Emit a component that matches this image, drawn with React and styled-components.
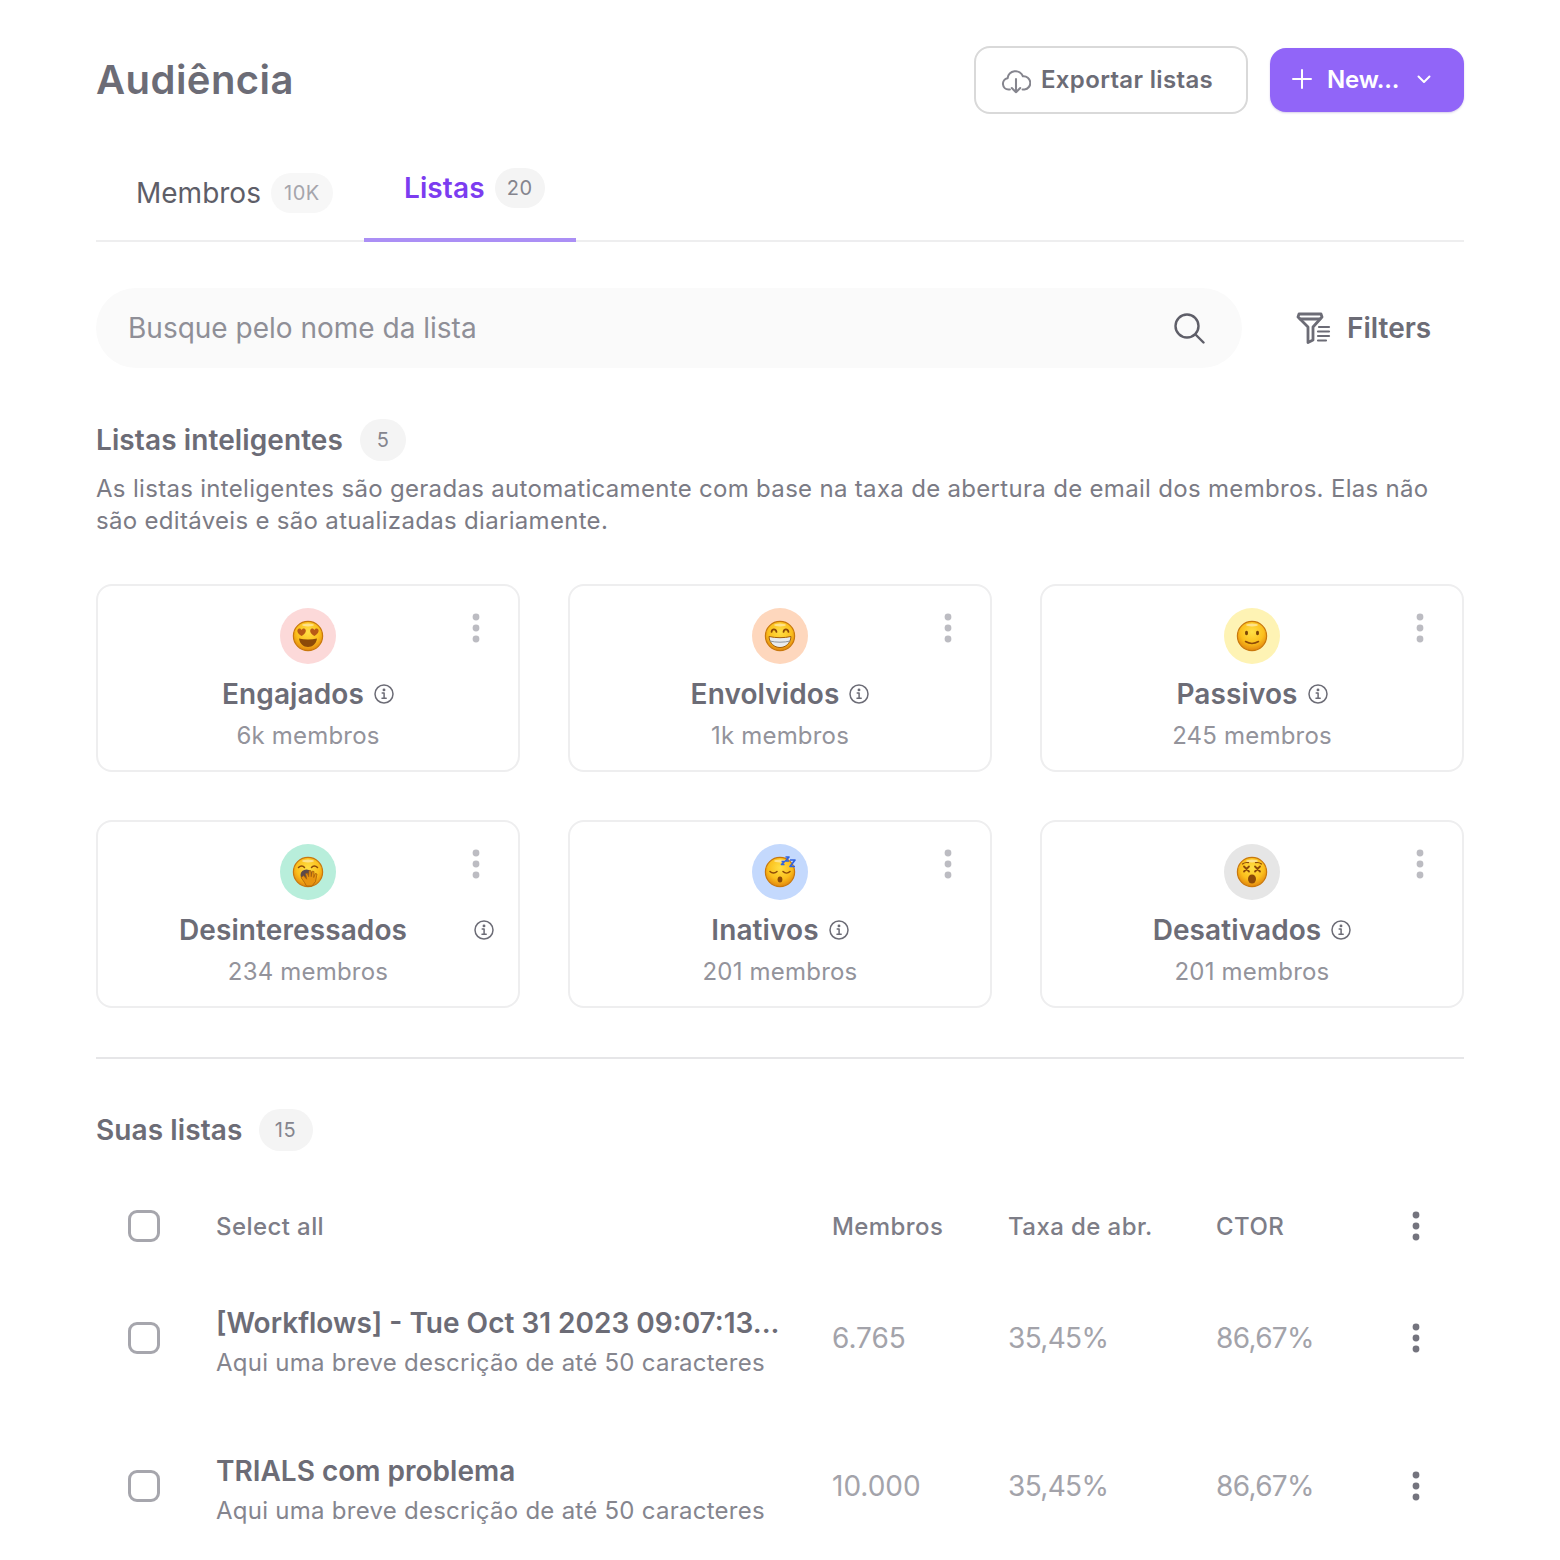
import React from "react";
import styled, { createGlobalStyle } from "styled-components";

const Global = createGlobalStyle`
  html, body { margin: 0; padding: 0; background: #fff; }
  body { font-family: Inter, "Liberation Sans", sans-serif; color: #6c6c76; }
  * { box-sizing: border-box; }
`;
const Page = styled.div`
  width: 1560px; height: 1560px; overflow: hidden; padding: 46px 96px 0;
`;
const Header = styled.header`
  display: flex; align-items: center; justify-content: space-between; height: 68px;
`;
const Title = styled.h1`
  margin: 0; font-size: 40px; line-height: 48px; font-weight: 600; letter-spacing: .45px; color: #6c6c76;
`;
const Actions = styled.div`display: flex; align-items: center; gap: 22px;`;
const GhostButton = styled.button`
  display: flex; align-items: center; gap: 10px; width: 274px; height: 68px; padding: 0 0 2px 25px;
  background: #fff; border: 2px solid #d9d9d9; border-radius: 16px;
  font: 600 24px Inter, sans-serif; letter-spacing: .34px; color: #6c6c76;
  svg { margin-top: 4px; }
`;
const PrimaryButton = styled.button`
  display: flex; align-items: center; width: 194px; height: 64px; padding: 0 0 2px 22px;
  background: #9165f8; border: 0; border-radius: 16px; box-shadow: 0 1px 2px rgba(90,60,170,.25);
  font: 600 24px Inter, sans-serif; letter-spacing: -.2px; color: #fff;
  span { margin: 0 17px 0 15px; }
`;
const Tabs = styled.nav`
  display: flex; height: 128px; border-bottom: 2px solid #eeeeef;
`;
const Tab = styled.div`
  position: relative; display: flex; align-items: center; gap: 10px;
  height: 126px; padding: ${p => p.$active ? "22px 32px 0 40px" : "32px 32px 0 40px"};
  width: ${p => p.$active ? "212px" : "268px"};
  font-size: 28px; font-weight: ${p => p.$active ? 600 : 400};
  letter-spacing: ${p => p.$active ? ".1px" : "0"};
  color: ${p => p.$active ? "#7c3cf0" : "#5e5e68"};
  ${p => p.$active && `&::after { content: ""; position: absolute; left: 0; right: 0; bottom: -2px; height: 4px; background: #ab8ff5; }`}
`;
const Pill = styled.span`
  display: inline-flex; align-items: center; justify-content: center;
  height: ${p => p.$h || 40}px; min-width: ${p => p.$w || 40}px; padding: 0 11px; border-radius: 21px;
  background: ${p => p.$bg || "#f4f4f4"}; color: ${p => p.$c || "#7f7f88"};
  font-size: ${p => p.$fs || 20}px; font-weight: 400; letter-spacing: .5px;
`;
const SearchRow = styled.div`
  display: flex; align-items: center; margin-top: 46px; gap: 54px;
`;
const Search = styled.div`
  flex: none; width: 1146px; height: 80px; border-radius: 40px; background: #fafafa;
  display: flex; align-items: center; justify-content: space-between; padding: 0 37px 0 32px;
  font-size: 28px; color: #8f8f97;
`;
const Filters = styled.div`
  display: flex; align-items: center; gap: 15px; font-size: 28px; font-weight: 600; color: #6c6c76;
`;
const SectionHead = styled.div`
  display: flex; align-items: center; gap: ${p => p.$gap || 17}px; height: 42px; margin-top: ${p => p.$mt}px;
  font-size: 28px; font-weight: 600; letter-spacing: .1px; color: #6c6c76;
`;
const Desc = styled.p`
  margin: 11.5px 0 0; font-size: 24px; line-height: 32px; letter-spacing: .31px; color: #7b7b85;
`;
const Cards = styled.div`
  display: grid; grid-template-columns: repeat(3, 424px); grid-auto-rows: 188px; gap: 48px; margin-top: 47.5px;
`;
const Card = styled.article`
  position: relative; display: flex; flex-direction: column; align-items: center; padding: 22px 24px 0;
  border: 2px solid #eeeeef; border-radius: 16px;
`;
const Avatar = styled.div`
  width: 56px; height: 56px; border-radius: 50%; background: ${p => p.$bg};
  display: flex; align-items: center; justify-content: center;
`;
const CardTitleRow = styled.div`
  display: flex; align-items: center; justify-content: center; gap: 10px; margin-top: 12px; height: 36px;
  width: ${p => p.$wide ? "372px" : "auto"};
`;
const CardTitle = styled.h3`
  margin: 0; flex: ${p => p.$wide ? 1 : "none"}; text-align: center; font-size: 28px; font-weight: 600; letter-spacing: .1px; color: #6c6c76;
`;
const CardSub = styled.div`
  margin-top: 8px; font-size: 24px; line-height: 32px; letter-spacing: .2px; color: #93939b;
`;
const CardMenu = styled.div`
  position: absolute; top: 26px; right: 34px; width: 16px;
  display: flex; justify-content: center;
`;
const Rule = styled.hr`
  margin: 49px 0 0; height: 2px; border: 0; background: #e6e6e8;
`;
const Row = styled.div`
  display: grid; grid-template-columns: 88px 616px 176px 208px 180px 40px; align-items: center;
  height: ${p => p.$h}px; padding-left: 32px; margin-top: ${p => p.$mt || 0}px;
`;
const Check = styled.div`
  width: 32px; height: 32px; border: 3px solid #a6a6ad; border-radius: 9px; background: #fff;
`;
const HeadCell = styled.div`
  font-size: 24px; font-weight: 500; letter-spacing: .42px; color: #7d7d87;
`;
const NameCell = styled.div`min-width: 0; margin-top: 10px;`;
const RowTitle = styled.div`
  font-size: 28px; line-height: 36px; font-weight: 600; color: #6c6c76;
  white-space: nowrap; margin-top: -2px;
`;
const RowSub = styled.div`
  margin-top: 6px; font-size: 24px; line-height: 32px; letter-spacing: .26px; color: #85858e; white-space: nowrap;
`;
const Num = styled.div`
  font-size: 28px; letter-spacing: ${p => p.$pct ? "-.65px" : "0"}; color: #a3a3aa;
`;
const DotsCell = styled.div`display: flex; justify-content: center; width: 40px;`;

const Dots = ({ color = "#bcbcc2" }) => (
  <svg width="12" height="32" viewBox="0 0 12 32" fill={color}>
    <circle cx="6" cy="5" r="3.4" /><circle cx="6" cy="16" r="3.4" /><circle cx="6" cy="27" r="3.4" />
  </svg>
);
const Info = () => (
  <svg width="20" height="20" viewBox="0 0 20 20" fill="none" stroke="#6c6c76" strokeWidth="1.5" strokeLinecap="round" strokeLinejoin="round">
    <circle cx="10" cy="10" r="9" />
    <path d="M8.2 9h1.9v5M8 14.2h4.2" />
    <circle cx="10" cy="5.9" r=".7" fill="#6c6c76" />
  </svg>
);
const Defs = () => (
  <svg width="0" height="0" style={{ position: "absolute" }}>
    <defs>
      <radialGradient id="face" cx="50%" cy="36%" r="64%">
        <stop offset="0" stopColor="#ffdf45" />
        <stop offset=".62" stopColor="#fbbf1c" />
        <stop offset="1" stopColor="#e2860e" />
      </radialGradient>
    </defs>
  </svg>
);
const Face = ({ children }) => (
  <svg width="32" height="32" viewBox="0 0 32 32" style={{ overflow: "visible" }}>
    <circle cx="16" cy="16" r="14.6" fill="url(#face)" stroke="#c9780c" strokeWidth="1.2" />
    <ellipse cx="16" cy="5" rx="6" ry="1.5" fill="#fff" opacity=".45" />
    {children}
  </svg>
);
const Heart = ({ x, y }) => (
  <path transform={`translate(${x} ${y})`} d="M0 5.5C-4.5 2.500-5 -.2-3.400-1.600-2 -2.700-.6-1.900 0 -.6c.6-1.300 2-2.100 3.400-1 1.600 1.400 1.100 4.100-3.400 7.100z" fill="#b85a16" />
);
const faces = {
  love: <Face><Heart x={9.6} y={10.5} /><Heart x={22.4} y={10.5} /><path d="M7 18.5c5.500 1.200 12.500 1.200 18 0-.8 5.500-4.500 8.500-9 8.500s-8.200-3-9-8.500z" fill="#8c4a08" /></Face>,
  grin: <Face>
    <path d="M7.500 12c.6-3.400 4.200-3.400 5 0M19.500 12c.6-3.400 4.200-3.400 5 0" fill="none" stroke="#8c4a08" strokeWidth="1.700" strokeLinecap="round" />
    <path d="M5 16.500c7 1.600 15 1.600 22 0-.4 7-5.500 11-11 11S5.400 23.500 5 16.500z" fill="#e9ecef" stroke="#a35f0a" strokeWidth="1" />
    <path d="M5.600 21c6.500 1.600 14.300 1.600 20.800 0" fill="none" stroke="#8f959b" strokeWidth="1" />
  </Face>,
  smile: <Face>
    <ellipse cx="10.500" cy="13" rx="1.500" ry="2.200" fill="#7a4506" /><ellipse cx="21.500" cy="13" rx="1.500" ry="2.200" fill="#7a4506" />
    <path d="M9.500 21.500c4 2.400 9 2.400 13 0" fill="none" stroke="#8c4a08" strokeWidth="1.500" strokeLinecap="round" />
  </Face>,
  yawn: <Face>
    <path d="M6.500 11.500c2-2 4.500-2 6 0M19.500 11.500c1.500-2 4-2 6 0" fill="none" stroke="#8c4a08" strokeWidth="1.500" strokeLinecap="round" />
    <ellipse cx="14.500" cy="19" rx="6" ry="5.500" fill="#5d4a4a" />
    <path d="M9 21.500l3.500 5 2 3.500h5.500l3.500-4.500 1.500-7.500-1.800-.5-1.500 4 .3-6-1.800-.3-1 5.500-.3-6-1.800 0-.4 6-1.400-3.500-1.600.5 1 5.500-3-3.500z" fill="#e8940f" stroke="#a85f0a" strokeWidth=".8" />
  </Face>,
  sleep: <Face>
    <path d="M6 15.500c2 2 5 2 7 0M19 15.500c2 2 5 2 7 0" fill="none" stroke="#8c4a08" strokeWidth="1.500" strokeLinecap="round" />
    <ellipse cx="16" cy="23.500" rx="2.400" ry="3" fill="#8c4a08" />
    <path d="M17.500 5.500h3l-3 3h3M21.500 1h3.500l-3.500 4h3.500M26 4h5l-5 6.500h5" fill="none" stroke="#2f62e0" strokeWidth="1.700" strokeLinejoin="round" />
  </Face>,
  dead: <Face>
    <path d="M8 10.500l5 5m0-5l-5 5M19 10.500l5 5m0-5l-5 5" fill="none" stroke="#8c4a08" strokeWidth="1.800" strokeLinecap="round" />
    <path d="M6.500 8c2-1.500 4-1.800 6-1.300M25.500 8c-2-1.500-4-1.800-6-1.300" fill="none" stroke="#8c4a08" strokeWidth="1.200" strokeLinecap="round" />
    <ellipse cx="16" cy="23" rx="4" ry="4.600" fill="#8c4a08" />
  </Face>,
};

const cards = [
  { t: "Engajados", s: "6k membros", bg: "#fcd9d9", f: "love" },
  { t: "Envolvidos", s: "1k membros", bg: "#fed7bd", f: "grin" },
  { t: "Passivos", s: "245 membros", bg: "#fef3b4", f: "smile" },
  { t: "Desinteressados", s: "234 membros", bg: "#b8eedb", f: "yawn", wide: true },
  { t: "Inativos", s: "201 membros", bg: "#c4d9fd", f: "sleep" },
  { t: "Desativados", s: "201 membros", bg: "#e6e6e6", f: "dead" },
];
const rows = [
  { t: "[Workflows] - Tue Oct 31 2023 09:07:13...", m: "6.765" },
  { t: "TRIALS com problema", m: "10.000" },
];

export default function App() {
  return (
    <Page>
      <Global />
      <Defs />
      <Header>
        <Title>Audiência</Title>
        <Actions>
          <GhostButton>
            <svg width="30" height="30" viewBox="0 0 32 32" fill="none" stroke="#85858e" strokeWidth="2.200" strokeLinecap="round" strokeLinejoin="round">
              <path d="M9.500 25H8a6 6 0 0 1-1-11.900A8.500 8.500 0 0 1 23.400 11 7 7 0 0 1 25 25h-2" />
              <path d="M16 14v14M11.500 23.500 16 28l4.500-4.500" />
            </svg>
            Exportar listas
          </GhostButton>
          <PrimaryButton>
            <svg width="20" height="20" viewBox="0 0 20 20" stroke="#fff" strokeWidth="2" strokeLinecap="round"><path d="M10 1v18M1 10h18" /></svg>
            <span>New...</span>
            <svg width="16" height="16" viewBox="0 0 16 16" fill="none" stroke="#fff" strokeWidth="2" strokeLinecap="round" strokeLinejoin="round"><path d="M2.500 5.500 8 11l5.500-5.500" /></svg>
          </PrimaryButton>
        </Actions>
      </Header>
      <Tabs>
        <Tab>Membros <Pill $bg="#f7f7f7" $c="#a5a5ac" $w={62}>10K</Pill></Tab>
        <Tab $active>Listas <Pill $w={50} $c="#85858e">20</Pill></Tab>
      </Tabs>
      <SearchRow>
        <Search>
          Busque pelo nome da lista
          <svg width="32" height="32" viewBox="0 0 32 32" fill="none" stroke="#5e5e68" strokeWidth="2.400" strokeLinecap="round"><circle cx="14" cy="14" r="11.500" /><path d="m23 23 7.500 7.500" /></svg>
        </Search>
        <Filters>
          <svg width="36" height="32" viewBox="0 0 36 32" fill="none" stroke="#6c6c76" strokeWidth="2.800" strokeLinecap="round" strokeLinejoin="round">
            <path d="M3 2h22l1 3-9 10v13l-5 2.500V15L2 5z" /><path d="M4 7h20" />
            <path d="M23 15h10M22 19.500h11M22 24h11M22 28.500h8" strokeWidth="2.200" />
          </svg>
          Filters
        </Filters>
      </SearchRow>
      <SectionHead $mt={51}>Listas inteligentes <Pill $h={42} $w={46} $c="#85858e">5</Pill></SectionHead>
      <Desc>As listas inteligentes são geradas automaticamente com base na taxa de abertura de email dos membros. Elas não são editáveis e são atualizadas diariamente.</Desc>
      <Cards>
        {cards.map(c => (
          <Card key={c.t}>
            <Avatar $bg={c.bg}>{faces[c.f]}</Avatar>
            <CardMenu><Dots /></CardMenu>
            <CardTitleRow $wide={c.wide}>
              <CardTitle $wide={c.wide}>{c.t}</CardTitle>
              <Info />
            </CardTitleRow>
            <CardSub>{c.s}</CardSub>
          </Card>
        ))}
      </Cards>
      <Rule />
      <SectionHead $mt={50} $gap={16}>Suas listas <Pill $h={42} $w={54} $c="#85858e">15</Pill></SectionHead>
      <Row $h={76} $mt={37}>
        <Check />
        <HeadCell>Select all</HeadCell>
        <HeadCell>Membros</HeadCell>
        <HeadCell>Taxa de abr.</HeadCell>
        <HeadCell>CTOR</HeadCell>
        <DotsCell><Dots color="#74747e" /></DotsCell>
      </Row>
      {rows.map(r => (
        <Row key={r.t} $h={148}>
          <Check />
          <NameCell>
            <RowTitle>{r.t}</RowTitle>
            <RowSub>Aqui uma breve descrição de até 50 caracteres</RowSub>
          </NameCell>
          <Num>{r.m}</Num>
          <Num $pct>35,45%</Num>
          <Num $pct>86,67%</Num>
          <DotsCell><Dots color="#74747e" /></DotsCell>
        </Row>
      ))}
    </Page>
  );
}
